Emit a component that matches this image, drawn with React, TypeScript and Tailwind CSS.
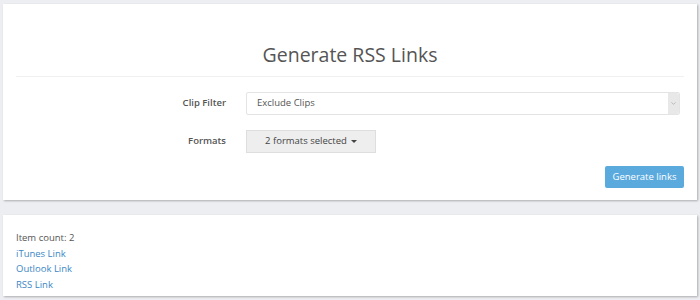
import { ChevronDown } from "lucide-react"

export default function App() {
  return (
    <div className="h-[300px] w-[700px] overflow-hidden bg-[#eceef1] pt-[4px] px-[3px] font-['Open_Sans',sans-serif] text-[#555]">
      {/* Generator card */}
      <div className="bg-white px-[13px] pt-[35px] pb-[12px] shadow-[1px_1px_2px_rgba(0,0,0,0.28)]">
        <h1 className="text-center text-[19.5px] leading-[32px] text-[#555]">Generate RSS Links</h1>
        <div className="mt-[5px] border-t border-[#f0f0f0]" />

        <div className="mt-[15px] flex items-center">
          <label className="w-[230px] pr-[20px] text-right text-[9.5px] font-semibold text-[#555]">Clip Filter</label>
          <div className="flex h-[23px] flex-1 items-center rounded-[2px] border border-[#e4e4e4] pl-[10px] text-[9.5px] text-[#555]">
            <span className="flex-1">Exclude Clips</span>
            <span className="grid h-[21px] w-[11px] place-items-center rounded-r-[2px] bg-[#e8e8e8] text-[#999]">
              <ChevronDown className="size-[7px]" strokeWidth={2} />
            </span>
          </div>
          <div className="w-[4px]" />
        </div>

        <div className="mt-[15px] flex items-center">
          <label className="w-[230px] pr-[20px] text-right text-[9.5px] font-semibold text-[#555]">Formats</label>
          <button
            type="button"
            className="flex h-[23px] w-[130px] items-center justify-center gap-[4px] border border-[#dedede] bg-[#eeeeee] text-[9.5px] text-[#444]"
          >
            2 formats selected
            <span className="h-0 w-0 border-x-[3px] border-t-[3px] border-x-transparent border-t-[#444]" />
          </button>
        </div>

        <div className="mt-[13px] flex justify-end">
          <button
            type="button"
            className="h-[22px] w-[79px] rounded-[2px] bg-[#5aaade] text-[9.5px] text-white"
          >
            Generate links
          </button>
        </div>
      </div>

      {/* Results card */}
      <div className="mt-[15px] bg-white px-[13px] pt-[15px] pb-[3px] text-[9.5px] leading-[15.7px] shadow-[1px_1px_2px_rgba(0,0,0,0.28)]">
        <div className="text-[#555]">Item count: 2</div>
        <a className="block text-[#3b87c4]">iTunes Link</a>
        <a className="block text-[#3b87c4]">Outlook Link</a>
        <a className="block text-[#3b87c4]">RSS Link</a>
      </div>
    </div>
  )
}
